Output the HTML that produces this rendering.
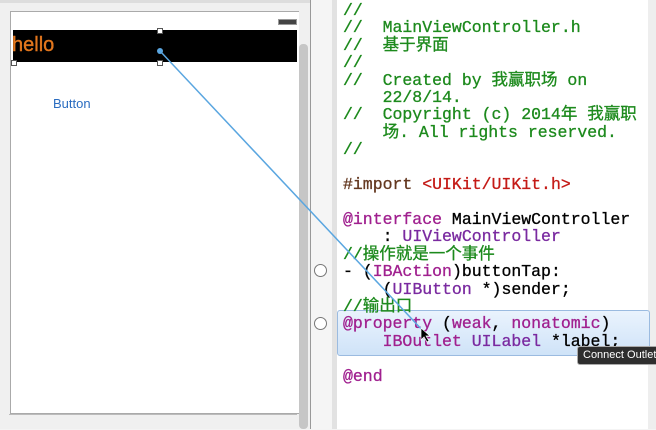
<!DOCTYPE html>
<html><head><meta charset="utf-8"><style>
body{margin:0;width:656px;height:429px;overflow:hidden;background:#f4f4f4;position:relative;font-family:"Liberation Sans",sans-serif}
.a{position:absolute}
.code{position:absolute;left:343px;top:2px;font-family:"Liberation Mono","Noto Sans CJK SC",monospace;font-size:16.5px;line-height:17.4px;white-space:pre;color:#000;-webkit-text-stroke:0.3px currentColor}
.c{color:#1d8a1d}.k{color:#a0208f}.s{color:#c41a16}.t{color:#7a2aa0}
.circ{position:absolute;width:11px;height:11px;border:1px solid #777;border-radius:50%;background:#fff}
</style></head><body>
<div class="a" style="left:0;top:0;width:310px;height:429px;background:#f0f0f0"></div>
<div class="a" style="left:10px;top:11px;width:288px;height:401px;background:#fff;border:1px solid #aaa;border-right:none"></div>
<div class="a" style="left:0;top:0;width:310px;height:3px;background:#ddd"></div>
<div class="a" style="left:9px;top:414px;width:288px;height:15px;border-top:1px solid #bbb"></div>
<div class="a" style="left:278px;top:19px;width:17px;height:4px;background:#444;border:1px solid #999"></div>
<div class="a" style="left:13px;top:30px;width:284px;height:32px;background:#000"></div>
<div class="a" style="left:12px;top:34px;color:#e2761d;font-size:20px;-webkit-text-stroke:0.4px #e2761d">hello</div>
<div class="a" style="left:157px;top:28px;width:4px;height:4px;border:1px solid #555;background:#fff"></div>
<div class="a" style="left:157px;top:60px;width:4px;height:4px;border:1px solid #555;background:#fff"></div>
<div class="a" style="left:11px;top:60px;width:4px;height:4px;border:1px solid #555;background:#fff"></div>
<div class="a" style="left:53px;top:96px;color:#2a6cc0;font-size:13px">Button</div>
<div class="a" style="left:299px;top:44px;width:9px;height:385px;background:#c6c6c6;border-radius:4px"></div>
<div class="a" style="left:310px;top:0;width:1px;height:429px;background:#999"></div>
<div class="a" style="left:311px;top:0;width:21px;height:429px;background:#f5f5f5"></div>
<div class="a" style="left:332px;top:0;width:5px;height:429px;background:#e2e2e2"></div>
<div class="a" style="left:337px;top:0;width:311px;height:429px;background:#fff"></div>
<div class="a" style="left:648px;top:0;width:8px;height:429px;background:#eee"></div>
<div class="a" style="left:337px;top:310px;width:311px;height:44px;background:linear-gradient(#eaf3fd,#cfe3f8);border:1px solid #9bbbe0;border-radius:3px"></div>
<div class="circ" style="left:314px;top:264px"></div>
<div class="circ" style="left:314px;top:317px"></div>
<div class="code"><span class="c">//
//  MainViewController.h
//  基于界面
//
//  Created by 我赢职场 on
    22/8/14.
//  Copyright (c) 2014年 我赢职
    场. All rights reserved.
//</span>

<span style="color:#643820">#import</span> <span class="s">&lt;UIKit/UIKit.h&gt;</span>

<span class="k">@interface</span> MainViewController
    : <span class="t">UIViewController</span>
<span class="c">//操作就是一个事件</span>
- (<span class="k">IBAction</span>)buttonTap:
    (<span class="t">UIButton</span> *)sender;
<span class="c">//输出口</span>
<span class="k">@property</span> (<span class="k">weak</span>, <span class="k">nonatomic</span>)
    <span class="k">IBOutlet</span> <span class="t">UILabel</span> *label;

<span class="k">@end</span></div>
<div class="a" style="left:577px;top:346px;width:90px;height:17px;background:#2e2e2e;border:1px solid #aaa;border-radius:3px;color:#fff;font-size:11px;line-height:17px;padding-left:5px;white-space:nowrap">Connect Outlet</div>
<svg class="a" style="left:0;top:0" width="656" height="429"><line x1="160" y1="51" x2="425" y2="333" stroke="#5aa6e0" stroke-width="1.5"/><circle cx="160" cy="51" r="3" fill="#5aa6e0"/><path d="M421 328 l0 12 l3 -3 l3 5 l2 -1 l-3 -5 l4 0z" fill="#000" stroke="#fff" stroke-width=".7"/></svg>
</body></html>
